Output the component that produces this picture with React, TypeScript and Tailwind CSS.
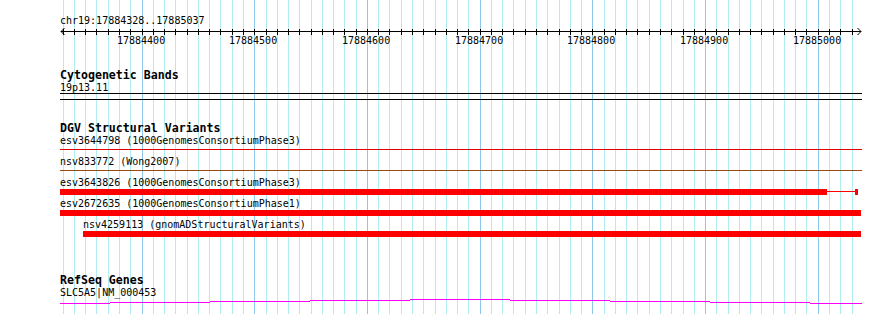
import React from "react";

// viewport of the browser: chr19:17884328..17885037 drawn over 802px
const START = 17884328;
const BP_PX = 1.127;
const TRACK_W = 802;
const xr = (bp: number) => (bp - START) * BP_PX + 0.4;

const gridBps: number[] = [];
for (let bp = 17884330; bp <= 17885030; bp += 10) gridBps.push(bp);
const labelBps = [17884400, 17884500, 17884600, 17884700, 17884800, 17884900, 17885000];

function Grid() {
  return (
    <svg className="absolute left-[60px] top-0" width={TRACK_W} height={314} shapeRendering="crispEdges">
      {gridBps.map((bp) => {
        const x = Math.round(xr(bp)) + 0.5;
        const major = bp % 100 === 0;
        return <line key={bp} x1={x} x2={x} y1={0} y2={314} stroke={major ? "#8ec6ec" : "#b0ecf0"} strokeWidth={1} />;
      })}
    </svg>
  );
}

function Ruler() {
  return (
    <svg className="block" width={TRACK_W} height={8} shapeRendering="crispEdges">
      <line x1={1} x2={801} y1={4.5} y2={4.5} stroke="#000" />
      {gridBps.map((bp) => {
        const x = Math.round(xr(bp)) + 0.5;
        return <line key={bp} x1={x} x2={x} y1={2} y2={8} stroke="#000" />;
      })}
      <polyline points="4.5,1 1,4.5 4.5,8" fill="none" stroke="#000" shapeRendering="auto" />
      <polyline points="797.5,1 801,4.5 797.5,8" fill="none" stroke="#000" shapeRendering="auto" />
    </svg>
  );
}

function TrackTitle({ children, className }: { children: React.ReactNode; className: string }) {
  return <div className={"text-[11.6px] font-bold " + className}>{children}</div>;
}

function Label({ children, indent = 0 }: { children: React.ReactNode; indent?: number }) {
  return (
    <div className="h-[12px] text-[10px] leading-[12px] whitespace-nowrap" style={{ paddingLeft: indent }}>
      {children}
    </div>
  );
}

// one DGV feature: label on top, glyph in the 9px band below
type Variant = {
  name: string;
  from: number;
  to: number;
  kind: "line" | "bar";
  color: string;
  tail?: { to: number; block: number };
};

const variants: Variant[] = [
  { name: "esv3644798 (1000GenomesConsortiumPhase3)", from: 0, to: TRACK_W, kind: "line", color: "#e00000" },
  { name: "nsv833772 (Wong2007)", from: 0, to: TRACK_W, kind: "line", color: "#9a4a12" },
  {
    name: "esv3643826 (1000GenomesConsortiumPhase3)",
    from: 0,
    to: 767,
    kind: "bar",
    color: "#ff0000",
    tail: { to: 795, block: 3 },
  },
  { name: "esv2672635 (1000GenomesConsortiumPhase1)", from: 0, to: 801, kind: "bar", color: "#ff0000" },
  { name: "nsv4259113 (gnomADStructuralVariants)", from: 23, to: 801, kind: "bar", color: "#ff0000" },
];

function VariantRow({ v }: { v: Variant }) {
  return (
    <div className="flex flex-col">
      <Label indent={v.from}>{v.name}</Label>
      <div className="h-[9px] flex items-start" style={{ paddingLeft: v.from }}>
        {v.kind === "line" ? (
          <div className="mt-[2px] h-[1px]" style={{ width: v.to - v.from, background: v.color }} />
        ) : (
          <>
            <div className="h-[6px] bg-[#ff0000]" style={{ width: v.to - v.from }} />
            {v.tail && (
              <>
                <div className="mt-[2px] h-[1px] bg-[#ff0000]" style={{ width: v.tail.to - v.to }} />
                <div className="h-[6px] bg-[#ff0000]" style={{ width: v.tail.block }} />
              </>
            )}
          </>
        )}
      </div>
    </div>
  );
}

// SLC5A5 drawn as a stepped 1px line
const geneSteps: [number, number, number][] = [
  [0, 50, 4],
  [50, 150, 3],
  [150, 250, 2],
  [250, 350, 1],
  [350, 450, 0],
  [450, 550, 1],
  [550, 650, 2],
  [650, 750, 3],
  [750, 802, 4],
];

function GeneLine() {
  return (
    <svg className="block" width={TRACK_W} height={6} shapeRendering="crispEdges">
      {geneSteps.map(([a, b, y], i) => (
        <line key={i} x1={a} x2={b} y1={y + 0.5} y2={y + 0.5} stroke="#ff00ff" strokeWidth={1} />
      ))}
    </svg>
  );
}

export default function App() {
  return (
    <div className="relative w-[890px] h-[314px] overflow-hidden bg-white text-black font-['DejaVu_Sans_Mono','Liberation_Mono',monospace]">
      <Grid />
      <div className="relative flex flex-col w-[862px] pl-[60px] pt-[15px]">
        <Label>chr19:17884328..17885037</Label>
        <Ruler />
        <div className="relative h-[12px] text-[10px] leading-[12px]">
          {labelBps.map((bp) => (
            <span key={bp} className="absolute top-0 w-[48px] text-center" style={{ left: Math.round(xr(bp)) - 25 }}>
              {bp}
            </span>
          ))}
        </div>

        <TrackTitle className="mt-[21px] leading-[14px]">Cytogenetic Bands</TrackTitle>
        <div className="h-[11px] text-[10px] leading-[11px]">19p13.11</div>
        <div className="h-[7px] border-y border-black" />

        <TrackTitle className="mt-[21px] leading-[14px]">DGV Structural Variants</TrackTitle>
        {variants.map((v) => (
          <VariantRow key={v.name} v={v} />
        ))}

        <TrackTitle className="mt-[34px] leading-[13px]">RefSeq Genes</TrackTitle>
        <Label>SLC5A5|NM_000453</Label>
        <GeneLine />
      </div>
    </div>
  );
}
